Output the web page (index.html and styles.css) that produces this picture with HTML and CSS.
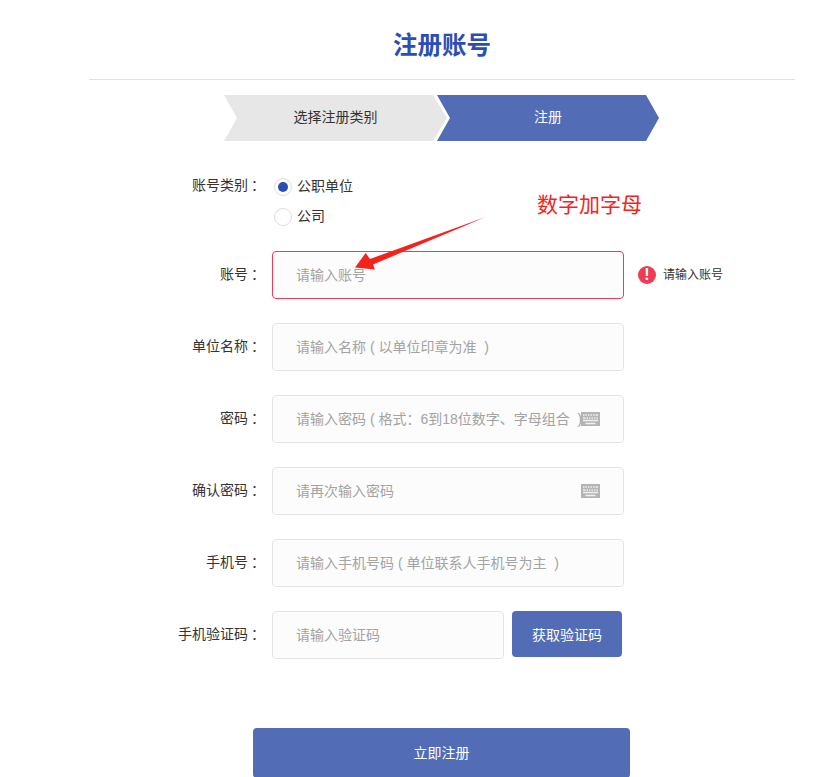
FILE: index.html
```html
<!DOCTYPE html>
<html lang="zh-CN">
<head>
  <meta charset="UTF-8" />
  <title>注册账号</title>
  <link rel="stylesheet" href="styles.css">
</head>
<body>
  <div class="wrap">
    <h1 class="title">注册账号</h1>

    <div class="steps">
      <div class="step step-first">选择注册类别</div>
      <div class="step step-active">注册</div>
    </div>

    <form class="form">
      <div class="row row-radio">
        <span class="label">账号类别<span class="colon">：</span></span>
        <div class="radios">
          <div class="radio-item"><span class="radio radio-on"></span><span class="radio-text">公职单位</span></div>
          <div class="radio-item"><span class="radio"></span><span class="radio-text">公司</span></div>
        </div>
      </div>

      <div class="row">
        <label class="label">账号<span class="colon">：</span></label>
        <div class="field"><input class="input input-error" type="text" placeholder="请输入账号" /></div>
        <div class="error">
          <span class="error-icon">!</span>
          <span class="error-text">请输入账号</span>
        </div>
      </div>

      <div class="row">
        <label class="label">单位名称<span class="colon">：</span></label>
        <div class="field"><input class="input" type="text" placeholder="请输入名称 ( 以单位印章为准  )" /></div>
      </div>

      <div class="row">
        <label class="label">密码<span class="colon">：</span></label>
        <div class="field">
          <input class="input" type="text" placeholder="请输入密码 ( 格式：6到18位数字、字母组合  )" />
          <svg class="keyboard" viewBox="0 0 19 14"><rect width="19" height="14" fill="#b4b4b4"/><path d="M2 3h1.500M4.500 3h1.500M7 3h1.500M9.500 3h1.500M12 3h1.500M14.500 3h2.500M2 6h2.500M5.500 6h1.500M8 6h1.500M10.500 6h1.500M13 6h1.500M15.500 6h1.500M2 8.500h15M4.500 11.500h10" stroke="#f0f0f0" stroke-width="1.300" fill="none"/></svg>
        </div>
      </div>

      <div class="row">
        <label class="label">确认密码<span class="colon">：</span></label>
        <div class="field">
          <input class="input" type="text" placeholder="请再次输入密码" />
          <svg class="keyboard" viewBox="0 0 19 14"><rect width="19" height="14" fill="#b4b4b4"/><path d="M2 3h1.500M4.500 3h1.500M7 3h1.500M9.500 3h1.500M12 3h1.500M14.500 3h2.500M2 6h2.500M5.500 6h1.500M8 6h1.500M10.500 6h1.500M13 6h1.500M15.500 6h1.500M2 8.500h15M4.500 11.500h10" stroke="#f0f0f0" stroke-width="1.300" fill="none"/></svg>
        </div>
      </div>

      <div class="row">
        <label class="label">手机号<span class="colon">：</span></label>
        <div class="field"><input class="input" type="text" placeholder="请输入手机号码 ( 单位联系人手机号为主  )" /></div>
      </div>

      <div class="row">
        <label class="label">手机验证码<span class="colon">：</span></label>
        <div class="field field-short"><input class="input" type="text" placeholder="请输入验证码" /></div>
        <button class="btn btn-code" type="button">获取验证码</button>
      </div>

      <button class="btn btn-submit" type="button">立即注册</button>
    </form>
  </div>

  <!-- annotation drawn on top of the screenshot -->
  <div class="note">数字加字母</div>
  <svg class="note-arrow" viewBox="0 0 140 60">
    <polygon points="130.700,2 15,44 10.700,38 0,52.500 20,54.500 18,49.500" fill="#f5231c"/>
  </svg>
</body>
</html>
```

FILE: styles.css
```css
* { box-sizing: border-box; }
html, body { height: 777px; overflow: hidden; }
body { margin: 0; background: #fff; color: #333; font-family: "Liberation Sans", "Noto Sans CJK SC", sans-serif; font-size: 14px; position: relative; }

.wrap { width: 706px; margin-left: 89px; }
.title { margin: 0; padding: 25px 0 12px; height: 80px; line-height: 42px; text-align: center; font-size: 24.500px; font-weight: bold; color: #2b4eb5; border-bottom: 1px solid #e2e2e2; }

.steps { display: flex; margin: 15px 0 0 135px; }
.step { height: 46px; line-height: 45px; text-align: center; font-size: 14px; }
.step-first { width: 223px; background: #e7e7e7; clip-path: polygon(0 0, 209px 0, 100% 50%, 209px 100%, 0 100%, 13px 50%); }
.step-active { width: 222px; margin-left: -10px; background: #526cb6; color: #fff; clip-path: polygon(0 0, 209px 0, 100% 50%, 209px 100%, 0 100%, 13px 50%); }

.form { margin-top: 31px; }
.row { display: flex; align-items: center; height: 48px; margin-bottom: 24px; }
.label { width: 173px; margin-right: 10px; text-align: right; font-size: 14px; padding-bottom: 5px; flex: none; }
/* colon sits mid-cell in the original font */
.colon { display: inline-block; transform: translateX(3px); }

.row-radio { align-items: flex-start; height: 60px; margin-bottom: 19px; }
.row-radio .label { line-height: 26px; }
.radio-item { display: flex; align-items: center; height: 30px; margin-left: 2px; font-size: 14px; }
.radio { width: 18px; height: 18px; margin-right: 5px; border: 1px solid #dedede; border-radius: 50%; background: #fff; position: relative; }
.radio-text { padding-bottom: 5px; }
.radio-on::after { content: ""; position: absolute; left: 3px; top: 3px; width: 10px; height: 10px; border-radius: 50%; background: #2b4eb5; }

.field { position: relative; width: 352px; height: 48px; }
.field-short { width: 232px; }
.input { width: 100%; height: 100%; padding: 0 20px 0 23px; border: 1px solid #e4e4e4; border-radius: 4px; background: #fcfcfc; font-family: inherit; font-size: 14px; outline: none; }
.input::placeholder { color: #a3a3a3; opacity: 1; }
.input-error { border-color: #ee3b56; }
.keyboard { position: absolute; right: 24px; top: 17px; width: 19px; height: 14px; }

.error { display: flex; align-items: center; margin-left: 14px; font-size: 12px; }
.error-icon { width: 18px; height: 18px; margin-right: 7px; border-radius: 50%; background: #ee3b56; color: #fff; font-size: 16px; font-weight: bold; line-height: 18px; text-align: center; }
.error-text { padding-bottom: 3px; }

.btn { border: none; border-radius: 4px; background: #526cb6; color: #fff; font-family: inherit; font-size: 14px; cursor: pointer; }
.btn-code { width: 110px; height: 46px; margin: 0 0 2px 8px; }
.btn-submit { display: block; width: 377px; height: 50px; margin: 69px 0 0 164px; padding-bottom: 4px; }

.note { position: absolute; left: 537px; top: 190px; font-size: 21px; line-height: 30px; color: #f5231c; }
.note-arrow { position: absolute; left: 355px; top: 215px; width: 140px; height: 60px; }
```
